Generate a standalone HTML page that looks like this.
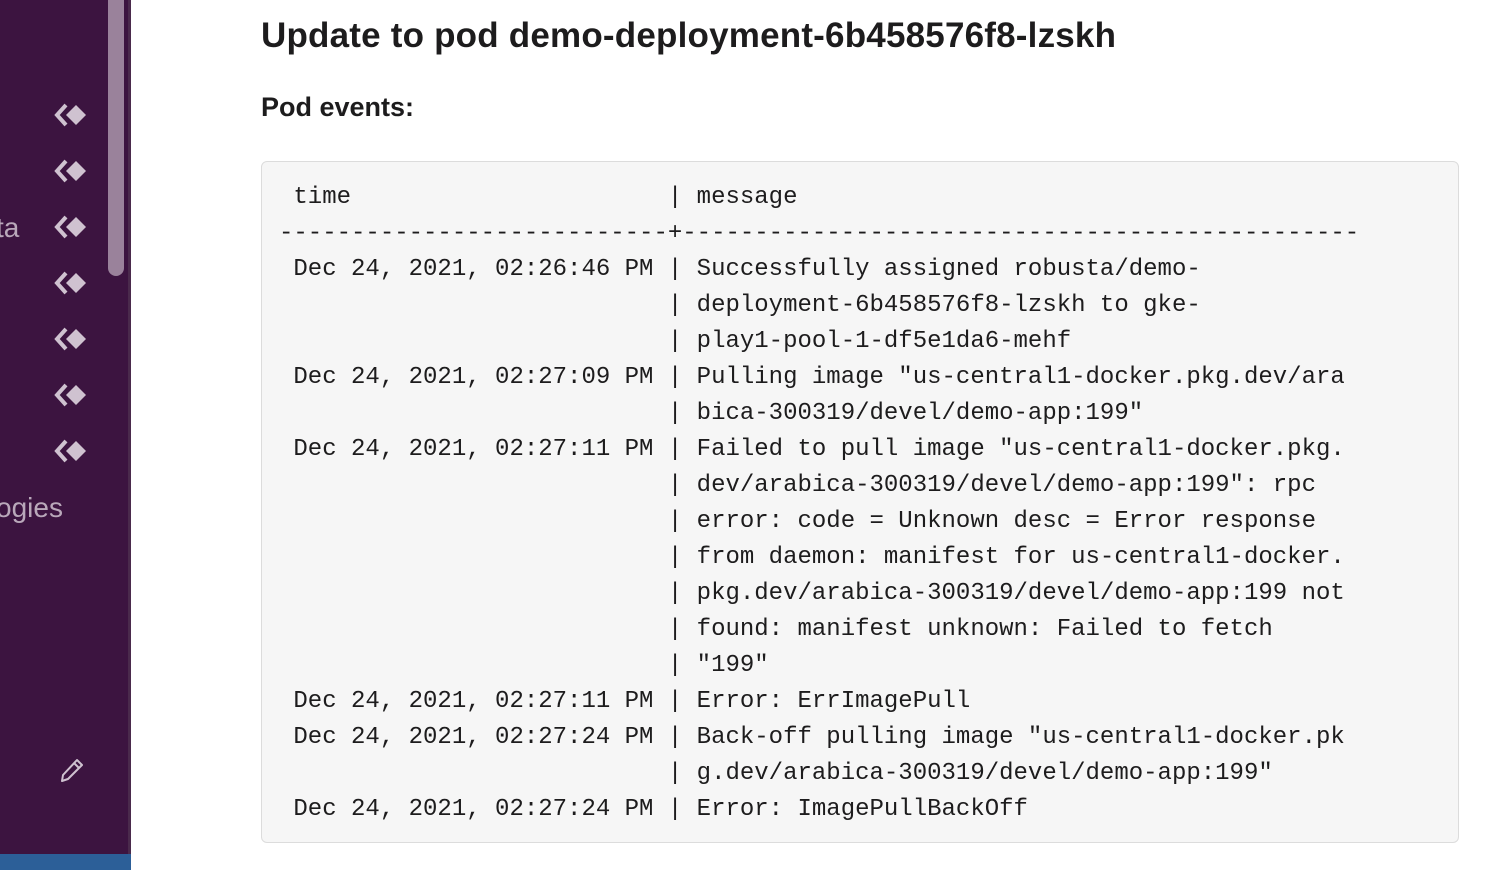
<!DOCTYPE html>
<html><head><style>
body{margin:0;width:1510px;height:870px;overflow:hidden;background:#fff;position:relative;font-family:"Liberation Sans",sans-serif;color:#1d1c1d}
.sb{position:absolute;left:0;top:0;width:128px;height:870px;background:#3c1440}
.div{position:absolute;left:128px;top:0;width:3px;height:870px;background:#4a2a4c}
.scroll{position:absolute;left:108px;top:0;width:16px;height:276px;background:#9a829b;border-radius:0 0 8px 8px}
.blue{position:absolute;left:0;top:854px;width:131px;height:16px;background:#2c5f98}
.st{position:absolute;color:#b9a8ba;font-size:28px}
.ic{position:absolute;left:52px;width:38px;height:26px}
h1{position:absolute;left:261px;top:16px;margin:0;font-size:35px;font-weight:bold;letter-spacing:0.2px}
h2{position:absolute;left:261px;top:92px;margin:0;font-size:27px;font-weight:bold}
.box{position:absolute;left:261px;top:161px;width:1196px;height:680px;background:#f6f6f6;border:1px solid #dcdcdc;border-radius:6px}
pre{position:absolute;left:17px;top:18px;margin:0;font-family:"Liberation Mono",monospace;font-size:24px;line-height:36px;color:#1d1c1d}
</style></head><body>
<div class="sb"></div><div class="scroll"></div><div class="div"></div><div class="blue"></div>
<div class="st" style="left:-4px;top:212px">ta</div>
<div class="st" style="left:-4px;top:492px">ogies</div>
<svg class="ic" style="top:102px" viewBox="0 0 38 26"><path d="M14 3 L5 13 L14 23" fill="none" stroke="#cfc2d0" stroke-width="4"/><path d="M24 3 L34 13 L24 23 L14 13Z" fill="#cfc2d0"/></svg>
<svg class="ic" style="top:158px" viewBox="0 0 38 26"><path d="M14 3 L5 13 L14 23" fill="none" stroke="#cfc2d0" stroke-width="4"/><path d="M24 3 L34 13 L24 23 L14 13Z" fill="#cfc2d0"/></svg>
<svg class="ic" style="top:214px" viewBox="0 0 38 26"><path d="M14 3 L5 13 L14 23" fill="none" stroke="#cfc2d0" stroke-width="4"/><path d="M24 3 L34 13 L24 23 L14 13Z" fill="#cfc2d0"/></svg>
<svg class="ic" style="top:270px" viewBox="0 0 38 26"><path d="M14 3 L5 13 L14 23" fill="none" stroke="#cfc2d0" stroke-width="4"/><path d="M24 3 L34 13 L24 23 L14 13Z" fill="#cfc2d0"/></svg>
<svg class="ic" style="top:326px" viewBox="0 0 38 26"><path d="M14 3 L5 13 L14 23" fill="none" stroke="#cfc2d0" stroke-width="4"/><path d="M24 3 L34 13 L24 23 L14 13Z" fill="#cfc2d0"/></svg>
<svg class="ic" style="top:382px" viewBox="0 0 38 26"><path d="M14 3 L5 13 L14 23" fill="none" stroke="#cfc2d0" stroke-width="4"/><path d="M24 3 L34 13 L24 23 L14 13Z" fill="#cfc2d0"/></svg>
<svg class="ic" style="top:438px" viewBox="0 0 38 26"><path d="M14 3 L5 13 L14 23" fill="none" stroke="#cfc2d0" stroke-width="4"/><path d="M24 3 L34 13 L24 23 L14 13Z" fill="#cfc2d0"/></svg>
<svg style="position:absolute;left:58px;top:756px" width="28" height="28" viewBox="0 0 28 28"><path d="M19 4 L24 9 L10 23 L4 25 L5 19 Z M16 7 L21 12" fill="none" stroke="#cfc2d0" stroke-width="2" stroke-linejoin="round"/></svg>
<h1>Update to pod demo-deployment-6b458576f8-lzskh</h1>
<h2>Pod events:</h2>
<div class="box"><pre> time                      | message
---------------------------+-----------------------------------------------
 Dec 24, 2021, 02:26:46 PM | Successfully assigned robusta/demo-
                           | deployment-6b458576f8-lzskh to gke-
                           | play1-pool-1-df5e1da6-mehf
 Dec 24, 2021, 02:27:09 PM | Pulling image "us-central1-docker.pkg.dev/ara
                           | bica-300319/devel/demo-app:199"
 Dec 24, 2021, 02:27:11 PM | Failed to pull image "us-central1-docker.pkg.
                           | dev/arabica-300319/devel/demo-app:199": rpc
                           | error: code = Unknown desc = Error response
                           | from daemon: manifest for us-central1-docker.
                           | pkg.dev/arabica-300319/devel/demo-app:199 not
                           | found: manifest unknown: Failed to fetch
                           | "199"
 Dec 24, 2021, 02:27:11 PM | Error: ErrImagePull
 Dec 24, 2021, 02:27:24 PM | Back-off pulling image "us-central1-docker.pk
                           | g.dev/arabica-300319/devel/demo-app:199"
 Dec 24, 2021, 02:27:24 PM | Error: ImagePullBackOff</pre></div>
</body></html>
